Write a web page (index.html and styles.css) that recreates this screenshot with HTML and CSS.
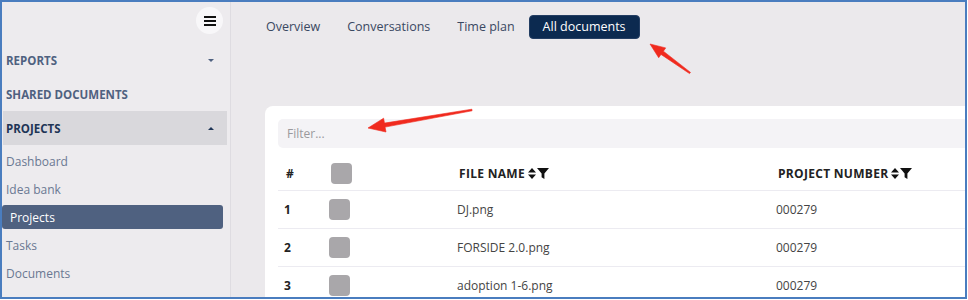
FILE: index.html
```html
<!DOCTYPE html>
<html lang="en">
<head>
    <meta charset="UTF-8">
    <meta name="viewport" content="width=device-width, initial-scale=1.0">
    <title>All documents</title>
    <link rel="stylesheet" href="styles.css">
</head>
<body>
<div class="frame">
    <aside class="sidebar">
        <div class="menu-top">
            <button class="burger" aria-label="Menu">
                <svg width="12" height="10" viewBox="0 0 12 10"><rect x="0" y="0" width="12" height="2"/><rect x="0" y="4" width="12" height="2"/><rect x="0" y="8" width="12" height="2"/></svg>
            </button>
        </div>
        <div class="section">REPORTS <span class="caret down"></span></div>
        <div class="section">SHARED DOCUMENTS</div>
        <div class="section open">PROJECTS <span class="caret up"></span></div>
        <ul class="sub">
            <li>Dashboard</li>
            <li>Idea bank</li>
            <li class="active">Projects</li>
            <li>Tasks</li>
            <li>Documents</li>
        </ul>
    </aside>

    <main class="main">
        <nav class="tabs">
            <a>Overview</a>
            <a>Conversations</a>
            <a>Time plan</a>
            <a class="current">All documents</a>
        </nav>

        <section class="card">
            <input class="filter" type="text" placeholder="Filter...">
            <div class="table">
                <div class="row head">
                    <div>#</div>
                    <div><span class="check"></span></div>
                    <div>FILE NAME <svg class="sort" width="8" height="11" viewBox="0 0 8 11"><path d="M4 0L8 4.5H0Z M0 6.5H8L4 11Z"/></svg><svg class="funnel" width="12" height="11" viewBox="0 0 12 11"><path d="M0 0H12L7.4 5.4V11L4.6 9.2V5.4Z"/></svg></div>
                    <div>PROJECT NUMBER <svg class="sort" width="8" height="11" viewBox="0 0 8 11"><path d="M4 0L8 4.5H0Z M0 6.5H8L4 11Z"/></svg><svg class="funnel" width="12" height="11" viewBox="0 0 12 11"><path d="M0 0H12L7.4 5.4V11L4.6 9.2V5.4Z"/></svg></div>
                </div>
                <div class="row">
                    <div class="num">1</div>
                    <div><span class="check"></span></div>
                    <div>DJ.png</div>
                    <div>000279</div>
                </div>
                <div class="row">
                    <div class="num">2</div>
                    <div><span class="check"></span></div>
                    <div>FORSIDE 2.0.png</div>
                    <div>000279</div>
                </div>
                <div class="row">
                    <div class="num">3</div>
                    <div><span class="check"></span></div>
                    <div>adoption 1-6.png</div>
                    <div>000279</div>
                </div>
            </div>
        </section>
    </main>

    <!-- annotation arrows drawn over the screenshot -->
    <svg class="arrows" width="968" height="300" viewBox="0 0 968 300">
        <polygon points="650,44 658.7,57.7 661,54.4 689.5,73.6 690.5,72.4 663.4,51.2 665.7,47.9"/>
        <polygon points="368,128 386,132 385.1,127.1 472.1,110.8 471.9,109.2 384.5,123.1 383.6,118.2"/>
    </svg>
</div>
</body>
</html>
```

FILE: styles.css
```css
* {
    box-sizing: border-box;
}
body {
    margin: 0;
    font-family: "Open Sans", Arial, sans-serif;
    background-color: #ffffff;
}
.frame {
    position: relative;
    width: 967px;
    height: 299px;
    border: 2px solid #4a7dbf;
    display: flex;
    overflow: hidden;
    background-color: #ebe9ec;
}

/* sidebar */
.sidebar {
    width: 229px;
    flex-shrink: 0;
    background-color: #edebee;
    border-right: 1px solid #dedce1;
}
.menu-top {
    height: 41px;
    display: flex;
    justify-content: flex-end;
    padding: 5px 7px 0 0;
}
.burger {
    width: 27px;
    height: 27px;
    border-radius: 50%;
    border: none;
    background-color: #f8f7f9;
    display: flex;
    align-items: center;
    justify-content: center;
    padding: 0;
}
.burger svg {
    fill: #111111;
}
.section {
    height: 34px;
    display: flex;
    align-items: center;
    justify-content: space-between;
    padding: 0 16px 0 4px;
    font-size: 11.5px;
    font-weight: 700;
    color: #4f6180;
}
.section.open {
    background-color: #d9d8dc;
    color: #1e3556;
    margin: 0 3px 0 1px;
    padding-left: 3px;
    padding-right: 13px;
}
.caret {
    width: 0;
    height: 0;
    border-left: 3px solid transparent;
    border-right: 3px solid transparent;
}
.caret.down {
    border-top: 3px solid #4f6180;
}
.caret.up {
    border-bottom: 3px solid #1e3556;
}
.sub {
    list-style: none;
    margin: 4px 0 0 0;
    padding: 0;
}
.sub li {
    height: 24px;
    margin-bottom: 4px;
    display: flex;
    align-items: center;
    padding-left: 4px;
    font-size: 12px;
    color: #6a7892;
}
.sub li.active {
    background-color: #4f6180;
    color: #ffffff;
    border-radius: 3px;
    margin-right: 7px;
    padding-left: 8px;
}

/* main */
.main {
    flex: 1;
    min-width: 0;
}
.tabs {
    display: flex;
    align-items: center;
    height: 24px;
    margin: 13px 0 0 35px;
}
.tabs a {
    font-size: 12.5px;
    color: #3a4862;
    margin-right: 27px;
    line-height: 22px;
}
.tabs a.current {
    background-color: #0c2a50;
    color: #ffffff;
    border-radius: 4px;
    margin-left: -13px;
    padding: 0 13px;
    border: 1px solid #243e63;
}
.card {
    margin: 67px 0 0 34px;
    width: 760px;
    height: 200px;
    background-color: #ffffff;
    border-radius: 8px 0 0 0;
    padding: 13px 0 0 13px;
}
.filter {
    width: 100%;
    height: 29px;
    border: none;
    border-radius: 5px;
    background-color: #f4f3f6;
    padding: 0 9px;
    font-family: inherit;
    font-size: 12px;
    color: #333333;
    outline: none;
}
.filter::placeholder {
    color: #9a999d;
}
.table {
    margin-top: 8px;
}
.row {
    display: grid;
    grid-template-columns: 51px 128px 319px 1fr;
    align-items: center;
    height: 38px;
    border-bottom: 1px solid #ecebf1;
    font-size: 12px;
    color: #444444;
}
.row > div {
    display: flex;
    align-items: center;
}
.row.head {
    height: 35px;
    font-weight: 700;
    font-size: 12px;
    letter-spacing: 0.3px;
    color: #222222;
}
.row.head > div:first-child {
    padding-left: 8px;
}
.row .num {
    padding-left: 6px;
    font-weight: 700;
    color: #222222;
}
.row.head > div:nth-child(2),
.row.head > div:nth-child(3),
.row.head > div:nth-child(4) {
    padding-left: 2px;
}
.check {
    width: 21px;
    height: 21px;
    border-radius: 4px;
    background-color: #a9a7aa;
}
.sort {
    margin-left: 3px;
    fill: #111111;
}
.funnel {
    margin-left: 1px;
    fill: #111111;
}

/* annotation overlay */
.arrows {
    position: absolute;
    left: -2px;
    top: -2px;
    pointer-events: none;
}
.arrows polygon {
    fill: #f02a1e;
    stroke: #f02a1e;
    stroke-width: 0.6;
    stroke-linejoin: round;
}
```
